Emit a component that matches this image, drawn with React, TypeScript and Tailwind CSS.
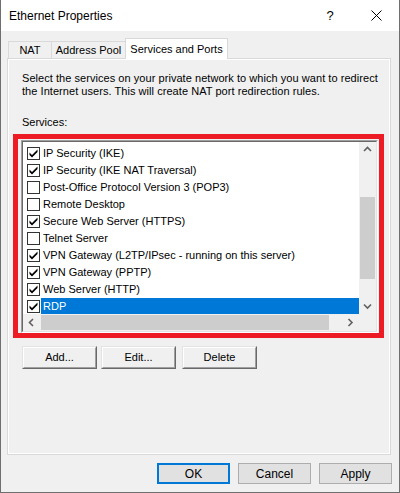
import React from "react";

const FONT = { fontFamily: '"Liberation Sans", Arial, sans-serif' };

function Check({ checked }: { checked: boolean }) {
  return (
    <div className="w-[13px] h-[13px] border border-[#333333] bg-white shrink-0 relative">
      {checked && (
        <svg width="11" height="11" viewBox="0 0 11 11" className="absolute left-0 top-0">
          <polygon points="1.5,4.5 4,7 9.5,1.5 9.5,4 4,9.5 1.5,7" fill="#000" />
        </svg>
      )}
    </div>
  );
}

function Chevron({ dir }: { dir: "up" | "down" | "left" | "right" }) {
  const pts: Record<string, string> = {
    up: "1,5 4.5,1.5 8,5",
    down: "1,1.5 4.5,5 8,1.5",
    left: "5,1 1.5,4.5 5,8",
    right: "1.5,1 5,4.5 1.5,8",
  };
  const vertical = dir === "up" || dir === "down";
  return (
    <svg width={vertical ? 9 : 7} height={vertical ? 7 : 9} viewBox={vertical ? "0 0 9 7" : "0 0 7 9"}>
      <polyline points={pts[dir]} fill="none" stroke="#606060" strokeWidth="1.6" />
    </svg>
  );
}

function ClassicButton({ label, className = "" }: { label: string; className?: string }) {
  return (
    <div className={`w-[75px] h-[23px] border border-t-[#e3e3e3] border-l-[#e3e3e3] border-r-[#696969] border-b-[#696969] ${className}`}>
      <div className="w-full h-full border border-t-white border-l-white border-r-[#a0a0a0] border-b-[#a0a0a0] bg-[#f0f0f0] flex items-center justify-center text-[11px] text-black">
        {label}
      </div>
    </div>
  );
}

const rows: { label: string; checked: boolean; selected?: boolean }[] = [
  { label: "IP Security (IKE)", checked: true },
  { label: "IP Security (IKE NAT Traversal)", checked: true },
  { label: "Post-Office Protocol Version 3 (POP3)", checked: false },
  { label: "Remote Desktop", checked: false },
  { label: "Secure Web Server (HTTPS)", checked: true },
  { label: "Telnet Server", checked: false },
  { label: "VPN Gateway (L2TP/IPsec - running on this server)", checked: true },
  { label: "VPN Gateway (PPTP)", checked: true },
  { label: "Web Server (HTTP)", checked: true },
  { label: "RDP", checked: true, selected: true },
];

export default function App() {
  return (
    <div
      className="w-[400px] h-[493px] bg-[#f0f0f0] border-l border-r border-b border-[#6f6f6f] flex flex-col text-black overflow-hidden"
      style={FONT}
    >
      {/* Title bar */}
      <div className="h-[31px] bg-white flex items-center shrink-0">
        <div className="pl-[8px] text-[12px] flex-1">Ethernet Properties</div>
        <div className="w-[46px] h-full flex items-center justify-center text-[13px]">?</div>
        <div className="w-[46px] h-full flex items-center justify-center">
          <svg width="11" height="11" viewBox="0 0 11 11">
            <line x1="0.5" y1="0.5" x2="10.5" y2="10.5" stroke="#000" strokeWidth="1" />
            <line x1="10.5" y1="0.5" x2="0.5" y2="10.5" stroke="#000" strokeWidth="1" />
          </svg>
        </div>
      </div>

      {/* Tabs */}
      <div className="mt-[7px] ml-[7px] h-[20px] flex items-end relative z-10 text-[11px]">
        <div className="w-[43px] h-[17px] border-t border-l border-[#d9d9d9] bg-[#f0f0f0] flex items-center justify-center pt-[1px]">
          NAT
        </div>
        <div className="w-[74px] h-[17px] border-t border-l border-[#d9d9d9] bg-[#f0f0f0] flex items-center justify-center pt-[1px]">
          Address Pool
        </div>
        <div className="w-[103px] h-[21px] -mb-px border-t border-l border-r border-[#d9d9d9] bg-white flex items-start justify-center pt-[2px]">
          Services and Ports
        </div>
      </div>

      {/* Panel */}
      <div className="ml-[6px] w-[384px] h-[397px] border border-[#d9d9d9] shrink-0">
        <div className="w-full h-full border border-white flex flex-col text-[11px]">
          <div className="mt-[12px] ml-[13px] leading-[13px] tracking-[0.05px]">
            Select the services on your private network to which you want to redirect
            <br />
            the Internet users. This will create NAT port redirection rules.
          </div>
          <div className="mt-[18px] ml-[13px] leading-[13px]">Services:</div>

          {/* Red annotated box containing list */}
          <div className="mt-[5px] ml-[4px] w-[371px] h-[204px] border-[5px] border-[#ed1c24] pl-[3px] pt-[1px]">
            <div className="w-[357px] h-[193px] border border-t-[#a0a0a0] border-l-[#a0a0a0] border-r-white border-b-white">
              <div className="w-full h-full border border-t-[#696969] border-l-[#696969] border-r-[#e3e3e3] border-b-[#e3e3e3] bg-white grid grid-cols-[1fr_17px] grid-rows-[1fr_17px]">
                {/* rows */}
                <div className="pt-[3px] overflow-hidden">
                  {rows.map((r) => (
                    <div key={r.label} className="h-[17px] flex items-center whitespace-nowrap">
                      <div className="ml-[4px]">
                        <Check checked={r.checked} />
                      </div>
                      <div
                        className={`ml-[1px] h-full flex items-center pl-[2px] ${
                          r.selected ? "flex-1 bg-[#0078d7] text-white" : ""
                        }`}
                      >
                        {r.label}
                      </div>
                    </div>
                  ))}
                </div>
                {/* vertical scrollbar */}
                <div className="bg-[#f0f0f0] flex flex-col">
                  <div className="h-[17px] flex items-center justify-center pb-[2px]">
                    <Chevron dir="up" />
                  </div>
                  <div className="flex-1 pt-[38px]">
                    <div className="mx-[1px] h-[82px] bg-[#cdcdcd]" />
                  </div>
                  <div className="h-[17px] flex items-center justify-center pt-[2px]">
                    <Chevron dir="down" />
                  </div>
                </div>
                {/* horizontal scrollbar */}
                <div className="bg-[#f0f0f0] flex items-stretch">
                  <div className="w-[17px] flex items-center justify-center">
                    <Chevron dir="left" />
                  </div>
                  <div className="flex-1 py-[1px]">
                    <div className="ml-[1px] w-[288px] h-full bg-[#cdcdcd]" />
                  </div>
                  <div className="w-[17px] flex items-center justify-center">
                    <Chevron dir="right" />
                  </div>
                </div>
                <div className="bg-[#f0f0f0]" />
              </div>
            </div>
          </div>

          <div className="mt-[8px] ml-[13px] flex">
            <ClassicButton label="Add..." />
            <ClassicButton label="Edit..." className="ml-[4px]" />
            <ClassicButton label="Delete" className="ml-[6px]" />
          </div>
        </div>
      </div>

      {/* Bottom buttons */}
      <div className="mt-[8px] flex justify-end pr-[7px] gap-[8px] text-[12px]">
        <div className="w-[73px] h-[21px] border-2 border-[#0078d7] bg-[#e1e1e1] flex items-center justify-center">
          OK
        </div>
        <div className="w-[73px] h-[21px] border border-[#adadad] bg-[#e1e1e1] flex items-center justify-center">
          Cancel
        </div>
        <div className="w-[73px] h-[21px] border border-[#adadad] bg-[#e1e1e1] flex items-center justify-center">
          Apply
        </div>
      </div>
    </div>
  );
}
